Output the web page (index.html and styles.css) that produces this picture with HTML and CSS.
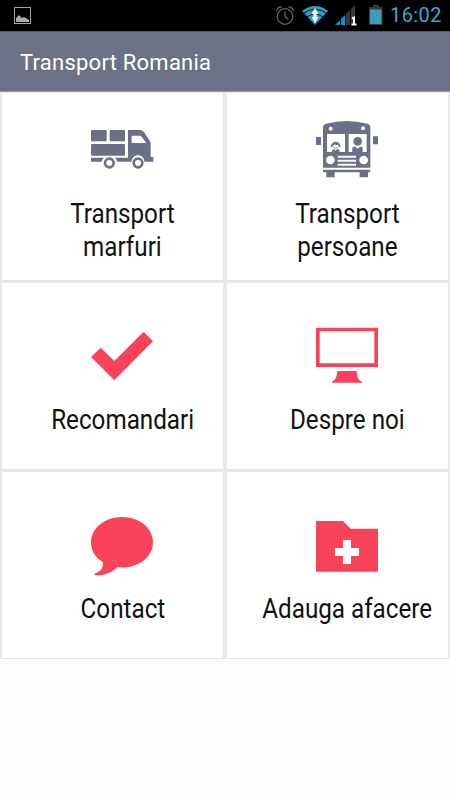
FILE: index.html
```html
<!DOCTYPE html>
<html lang="ro">
<head>
  <meta charset="UTF-8">
  <title>Transport Romania</title>
  <link rel="stylesheet" href="styles.css">
</head>
<body>
  <div class="status">
    <svg class="status-picture" viewBox="0 0 18 18">
      <rect x="1.500" y="0.500" width="16" height="16" fill="none" stroke="#a4a4a4"/>
      <path d="M3 15v-4l3-3 3 3 2-1 5 3v2z" fill="#aaa"/>
    </svg>
    <svg class="status-icons" viewBox="0 0 110 31">
      <!-- alarm -->
      <g fill="none" stroke="#606060" stroke-width="1.300">
        <circle cx="11" cy="16.500" r="7.800"/>
        <path d="M11 11v5.500l3 3M2.500 11q1-4 5-4M14.500 7q4 0 5 4"/>
      </g>
      <!-- wifi -->
      <path d="M28 11Q41 1 54 11L41 25z" fill="#3697bf"/>
      <path d="M29 13.500Q41 5 53 13.500M33 17Q41 11 49 17" fill="none" stroke="#001b28" stroke-width="1"/>
      <path d="M41 8l3.500 6h-2v3h2L41 23l-3.500-6h2v-3h-2z" fill="#fff"/>
      <!-- signal -->
      <path d="M61 25l5-5v5zM67 25v-6l4-4v10z" fill="#0095e8"/>
      <path d="M72 25V14l4-4v15zM77 25V9l4-4v20z" fill="#383838"/>
      <path d="M78 18.500l2-1v7M77.500 24.500h5" fill="none" stroke="#fff" stroke-width="2"/>
      <!-- battery -->
      <path d="M99 5h6v2h3.500v18H95V7h4z" fill="#3a3a3a"/>
      <path d="M96 9.500h11.500V24H96z" fill="#3e9cbc"/>
    </svg>
    <span class="clock">16:02</span>
  </div>
  <div class="header">
    <h1>Transport Romania</h1>
  </div>
  <div class="menu">
    <a class="tile">
      <svg class="icon grey" viewBox="0 0 255 210">
        <rect x="33" y="45" width="47" height="34" rx="3"/>
        <rect x="89" y="45" width="46" height="34" rx="3"/>
        <rect x="33" y="87" width="102" height="35" rx="3"/>
        <path d="M33 128h39q-7 6-7 12H36q-3 0-3-3zM104 128h40V45h36q7 0 12 6l17 26q3 4 3 10v39h8v14h-27c0-12-9-19-19-19s-19 7-19 19h-44q0-7-7-12zM155 63v21h44l-14-19q-2-3-5-3h-22q-3 0-3 1z" fill-rule="evenodd"/>
        <circle cx="88" cy="144" r="13" fill="none" stroke="#6b7087" stroke-width="8"/>
        <circle cx="174" cy="144" r="13" fill="none" stroke="#6b7087" stroke-width="8"/>
      </svg>
      <span class="label">Transport<br>marfuri</span>
    </a>
    <a class="tile">
      <svg class="icon grey" viewBox="0 0 255 210">
        <path d="M54 37q0-8 9-11 62-16 124 0 9 3 9 11v121H54z"/>
        <path d="M33 66h15v24H33zM204 64h15v24h-15zM54 164h142v8h-7v15h-25v-15H89v15H64v-15H54z"/>
        <g fill="#fff">
          <circle cx="77" cy="41" r="6"/>
          <circle cx="174" cy="40" r="6"/>
          <path d="M66 57h54v54H66zM131 57h54v54h-54z"/>
          <circle cx="76" cy="135" r="13"/>
          <circle cx="176" cy="135" r="13"/>
          <path d="M98 122h55v6H98zM98 134h55v6H98zM98 146h55v6H98z"/>
        </g>
        <path d="M77 97q2-17 15-17t15 17l-6-2v-4q-9 0-12-3-2 3-6 4v3z"/>
        <path d="M84 96q8 8 16 0" fill="none" stroke="#6b7087" stroke-width="2"/>
        <path d="M81 111q0-9 7-9l4 5 4-5q8 0 8 9z"/>
        <circle cx="158" cy="79" r="13"/>
        <path d="M142 111V99q0-4 5-4h5l6 7 6-7h4q5 0 5 4v12z"/>
      </svg>
      <span class="label">Transport<br>persoane</span>
    </a>
    <a class="tile">
      <svg class="icon red" viewBox="0 -15 255 225">
        <path d="M33 111l29-28 41 40 88-88 28 29-116 117z"/>
      </svg>
      <span class="label">Recomandari</span>
    </a>
    <a class="tile">
      <svg class="icon red" viewBox="0 0 255 225">
        <path d="M33 38h186v118H33zM44 49v96h164V49z" fill-rule="evenodd"/>
        <path d="M97 168h58c1 16 4 28 16 32v3H81v-3c11-5 15-16 16-32z"/>
      </svg>
      <span class="label">Despre noi</span>
    </a>
    <a class="tile">
      <svg class="icon red" viewBox="0 0 255 240">
        <path d="M126 36c52 0 93 33 93 76 0 46-48 82-107 75-18 18-43 26-67 24-3-2-1-5 2-6 16-7 23-17 22-33-25-15-36-36-36-60 0-43 42-76 93-76z"/>
      </svg>
      <span class="label">Contact</span>
    </a>
    <a class="tile">
      <svg class="icon red" viewBox="0 -15 255 240">
        <path d="M33 33h81l23 23h82v129H33z"/>
        <path d="M114 90h24v24h24v24h-24v24h-24v-24H90v-24h24z" fill="#fff"/>
      </svg>
      <span class="label">Adauga afacere</span>
    </a>
  </div>
</body>
</html>
```
FILE: styles.css
```css
body {
  margin: 0;
  height: 800px;
  overflow: hidden;
  background: #fdfdfd;
  font-family: Roboto, sans-serif;
}

/* status bar */
.status {
  display: flex;
  align-items: center;
  height: 31px;
  padding: 0 8px 0 13px;
  background: #000;
}
.status-picture {
  width: 18px;
  height: 18px;
}
.status-icons {
  width: 110px;
  height: 31px;
  margin-left: auto;
}
.clock {
  width: 52px;
  margin-left: 6px;
  color: #36a9d4;
  font-size: 20px;
  line-height: 33px;
  letter-spacing: 0.400px;
  white-space: nowrap;
}

.header {
  box-sizing: border-box;
  height: 61px;
  padding-left: 20px;
  background: #6d7187;
  border-top: 1px solid #55586a;
  border-bottom: 1px solid #999ba6;
}
.header h1 {
  margin: 0;
  color: #fff;
  font-size: 22px;
  font-weight: 400;
  line-height: 61px;
  letter-spacing: 0.240px;
}

/* menu tiles */
.menu {
  display: grid;
  grid-template-columns: 221px 221px;
  grid-template-rows: 188px 187px 187px;
  column-gap: 4px;
  row-gap: 2px;
  padding: 1px 2px 0;
  background: #e9e9e9;
}
.tile {
  display: flex;
  flex-direction: column;
  align-items: center;
  padding-left: 20px;
  background: #fff;
  border-bottom: 1px solid #e7e2d8;
  box-sizing: border-box;
  color: #111;
}
.icon {
  flex: none;
  width: 85px;
  height: 70px;
  margin-top: 22px;
}
.tile:nth-child(n+3) .icon {
  height: 75px;
  margin-top: 32px;
}
.tile:nth-child(n+5) .icon {
  height: 80px;
  margin-top: 33px;
}
.grey {
  fill: #6b7087;
}
.red {
  fill: #f8435a;
}
.label {
  margin-top: 13px;
  font-size: 28px;
  line-height: 32.500px;
  text-align: center;
  white-space: nowrap;
  transform: scaleX(0.865);
}
.tile:nth-child(n+3) .label {
  margin-top: 14px;
}
.tile:nth-child(n+5) .label {
  margin-top: 8px;
}
```
